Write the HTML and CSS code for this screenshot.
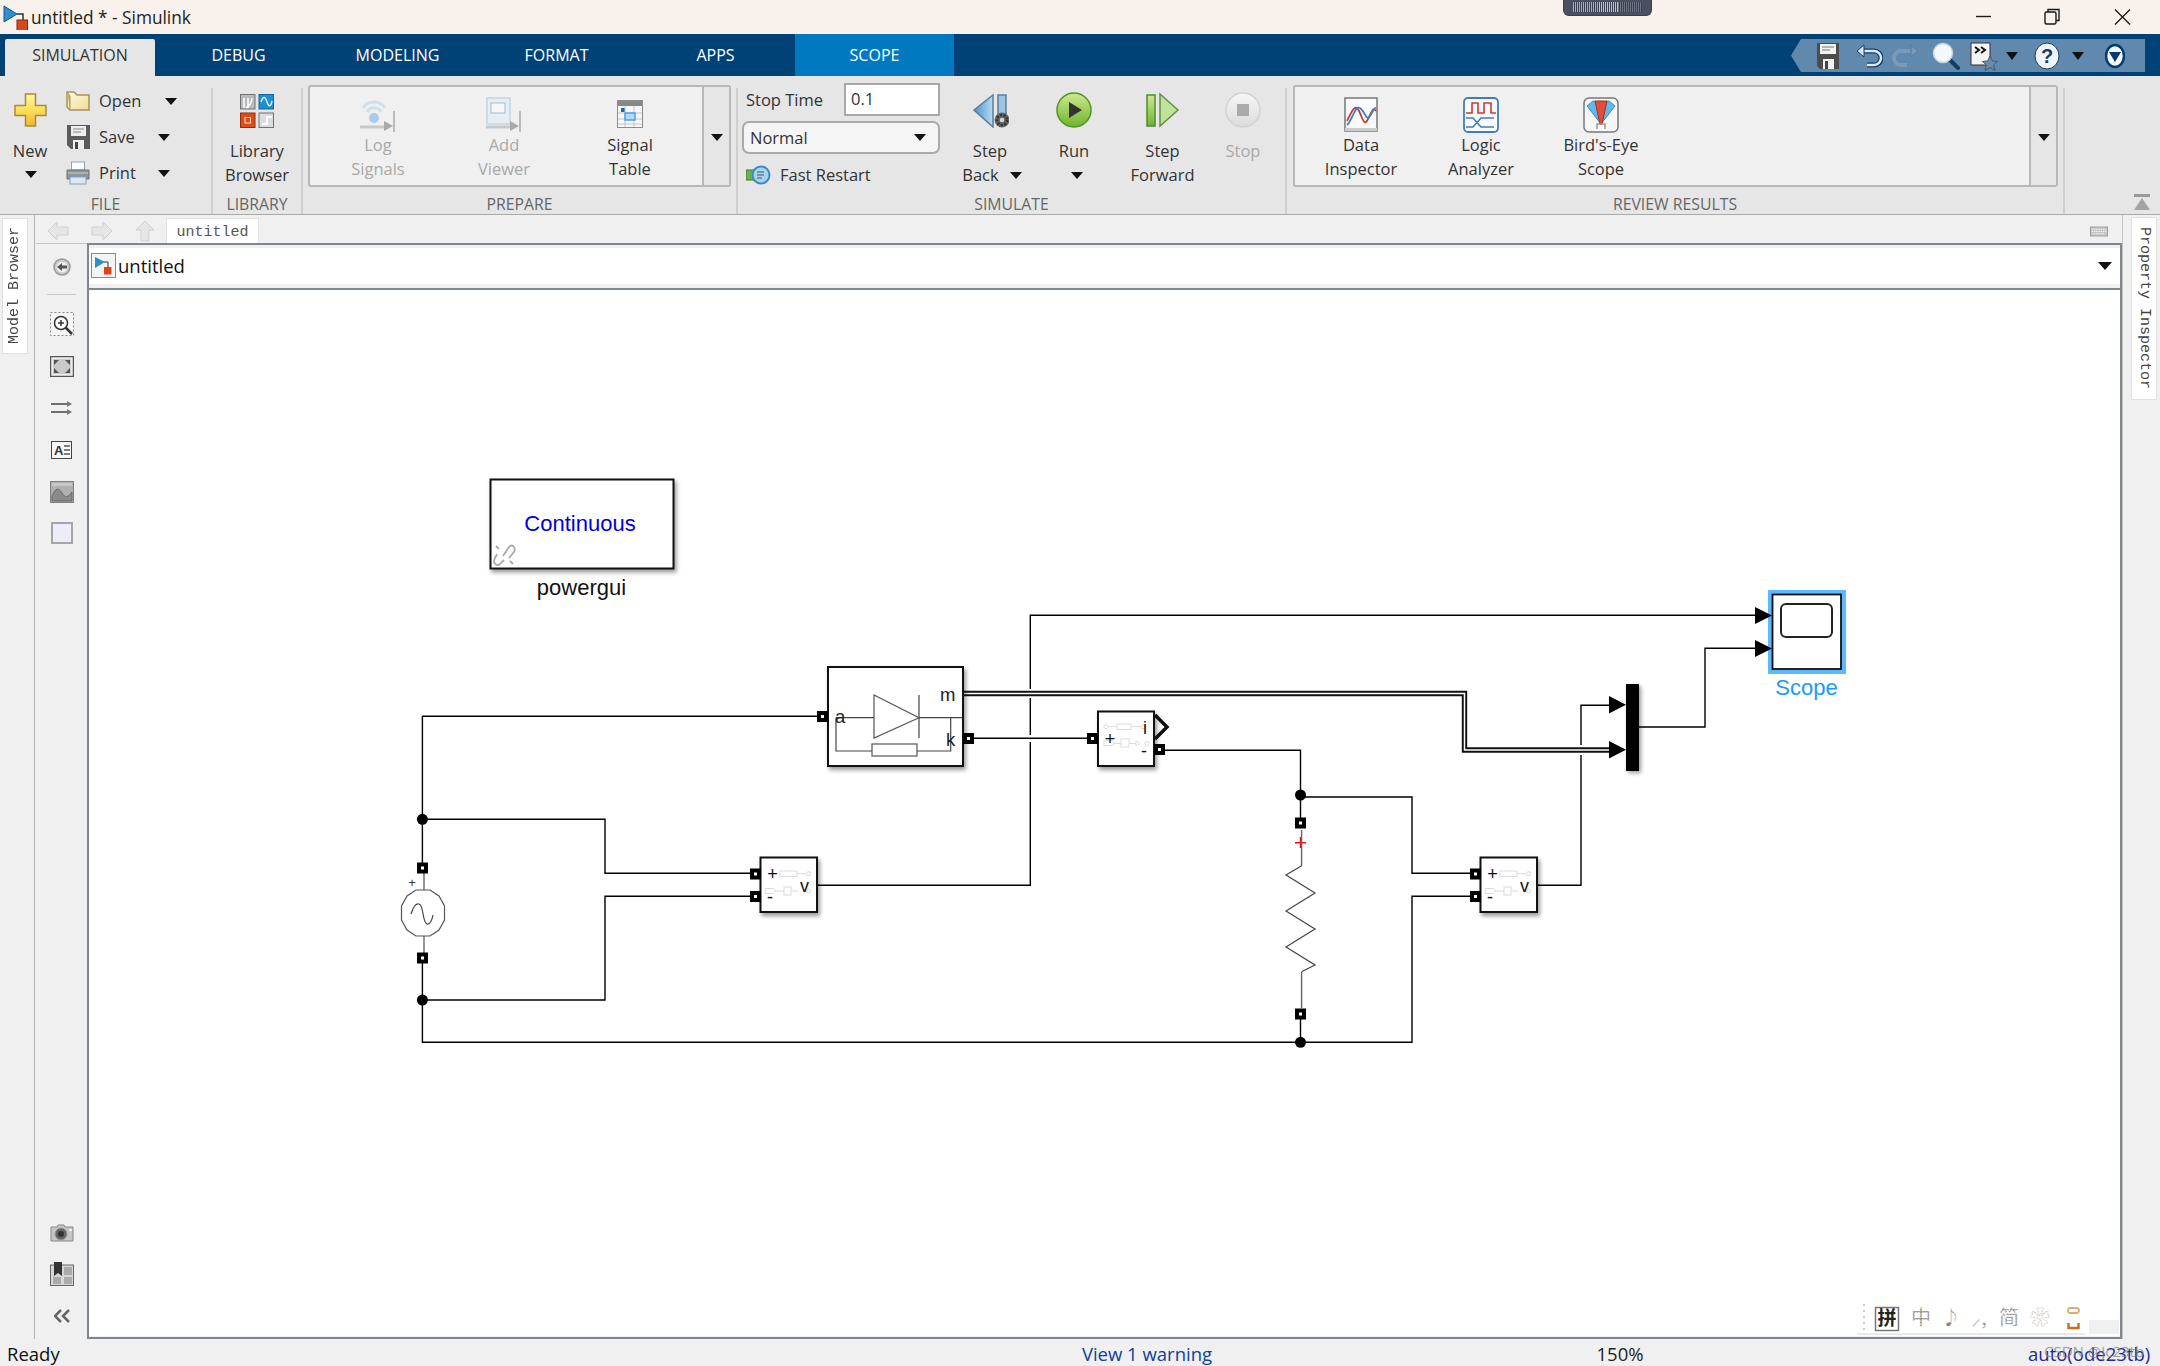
FILE: index.html
```html
<!DOCTYPE html>
<html lang="en">
<head>
<meta charset="utf-8">
<title>untitled * - Simulink</title>
<link rel="stylesheet" href="styles.css">
</head>
<body>
<svg class="defs" aria-hidden="true">
  <defs>
    <linearGradient id="gYellow" x1="0" y1="0" x2="0" y2="1"><stop offset="0" stop-color="#fff6a0"/><stop offset=".55" stop-color="#fbdc55"/><stop offset="1" stop-color="#f0b82c"/></linearGradient>
    <linearGradient id="gFolder" x1="0" y1="0" x2="1" y2="1"><stop offset="0" stop-color="#fffbe0"/><stop offset="1" stop-color="#f1dc95"/></linearGradient>
    <linearGradient id="gGreen" x1="0" y1="0" x2="0" y2="1"><stop offset="0" stop-color="#cfe88e"/><stop offset="1" stop-color="#6fb52e"/></linearGradient>
    <linearGradient id="gStop" x1="0" y1="0" x2="0" y2="1"><stop offset="0" stop-color="#f6f6f6"/><stop offset="1" stop-color="#dcdcdc"/></linearGradient>
    <linearGradient id="gBlue" x1="0" y1="0" x2="1" y2="0"><stop offset="0" stop-color="#4f93c9"/><stop offset="1" stop-color="#b9dbf3"/></linearGradient>
  </defs>
</svg>

<header class="titlebar">
  <svg class="logo" width="27" height="27" viewBox="0 0 27 27"><path d="M15 11h6v8" fill="none" stroke="#333" stroke-width="1.5"/><path d="M2 3l13 8-13 8z" fill="#2f8fc9" stroke="#17578a"/><rect x="15" y="17" width="10.500" height="10.500" fill="#d8481c" stroke="#7a2a10"/></svg>
  <span class="title-text">untitled * - Simulink</span>
  <div class="meter"><i class="led-on"></i><i class="led-mid"></i><i class="led-off"></i></div>
  <svg class="win-ctl" width="155" height="34" viewBox="0 0 155 34"><g fill="none" stroke="#1a1a1a" stroke-width="1.4"><path d="M0 16.500h15"/><rect x="69" y="12" width="11" height="12" rx="1.500"/><path d="M72 12v-2.500h11v11h-3"/><path d="M139 9.500l15 15M154 9.500l-15 15"/></g></svg>
</header>

<nav class="tabs">
  <div class="tab tab-active">SIMULATION</div>
  <div class="tab">DEBUG</div>
  <div class="tab">MODELING</div>
  <div class="tab">FORMAT</div>
  <div class="tab">APPS</div>
  <div class="tab tab-scope">SCOPE</div>
  <div class="quick">
    <svg width="26" height="28" viewBox="0 0 26 28"><path d="M2 1h22v26H5l-3-3z" fill="#4c4c4c"/><rect x="5" y="2" width="16" height="10" fill="#f2f2f2"/><path d="M7 5h12M7 8h8" stroke="#777"/><rect x="8" y="17" width="11" height="10" fill="#f2f2f2"/><rect x="10" y="19" width="3" height="8" fill="#444"/></svg>
    <svg width="28" height="26" viewBox="0 0 28 26"><path d="M9 8h10a6 6 0 0 1 0 14h-7" fill="none" stroke="#123d66" stroke-width="5"/><path d="M9 8h10a6 6 0 0 1 0 14h-7" fill="none" stroke="#d7e9f7" stroke-width="2.500"/><path d="M9 2v12l-7-6z" fill="#d7e9f7" stroke="#123d66"/></svg>
    <svg width="28" height="26" viewBox="0 0 28 26"><path d="M19 8H9a6 6 0 0 0 0 14h6" fill="none" stroke="#7a9ab8" stroke-width="4"/><path d="M19 2v12l7-6z" fill="#7a9ab8" stroke="#527aa0"/></svg>
    <svg width="28" height="28" viewBox="0 0 28 28"><path d="M17 17l9 9" stroke="#123d66" stroke-width="4" stroke-linecap="round"/><circle cx="11" cy="11" r="9.500" fill="#f4f8fb" stroke="#c7d6e2" stroke-width="1.500"/></svg>
    <svg width="28" height="30" viewBox="0 0 28 30"><path d="M1 2h19v22H1z" fill="#f4f4f4" stroke="#333"/><path d="M5 6l4 3-4 3M11 6l4 3-4 3" fill="none" stroke="#111" stroke-width="2"/><path d="M20 15l2.500 5 5 .5-4 3.500 1.500 5.500-5-3-5 3 1.500-5.500-4-3.500 5-.5z" fill="#6d8ba8" stroke="#3e5a75"/></svg>
    <svg class="tri" width="12" height="8" viewBox="0 0 12 8"><path d="M0 0h12L6 8z"/></svg>
    <svg width="26" height="28" viewBox="0 0 26 28"><ellipse cx="13" cy="14" rx="12" ry="13" fill="#f0f4f8" stroke="#123d66"/><text class="qmark" x="13" y="21" text-anchor="middle">?</text></svg>
    <svg class="tri" width="12" height="8" viewBox="0 0 12 8"><path d="M0 0h12L6 8z"/></svg>
    <svg width="20" height="26" viewBox="0 0 20 26"><ellipse cx="10" cy="13" rx="9" ry="11" fill="#f4f8fb" stroke="#003c6e" stroke-width="2.500"/><path d="M4 9h12l-6 10z" fill="#003c6e"/></svg>
  </div>
</nav>

<section class="ribbon">
  <div class="group group-file">
    <div class="group-body file-body">
      <div class="new-col">
        <svg width="33" height="34" viewBox="0 0 33 34"><path d="M11.500 1h10v11.500H32v10H21.500V33h-10V22.500H1v-10h10.500z" fill="url(#gYellow)" stroke="#a98a3c" stroke-width="1.500"/></svg>
        <span class="lbl new-lbl">New</span>
        <svg class="tri tri-row" width="12" height="7" viewBox="0 0 12 7"><path d="M0 0h12L6 7z"/></svg>
      </div>
      <div class="file-list">
        <div class="file-row"><svg width="24" height="20" viewBox="0 0 24 20"><path d="M1 1h7l3 3h12v15H4L1 16z" fill="url(#gFolder)" stroke="#a98f5c" stroke-width="1.500"/><path d="M1 1l3 4v14" fill="#cdb67c" stroke="#a98f5c"/></svg><span class="lbl file-name">Open</span><svg class="tri file-tri-open" width="12" height="7" viewBox="0 0 12 7"><path d="M0 0h12L6 7z"/></svg></div>
        <div class="file-row"><svg width="24" height="24" viewBox="0 0 24 24"><path d="M1 0h23v24H5l-4-4z" fill="#5c5c5c"/><rect x="5" y="1" width="15" height="10" fill="#eee"/><path d="M7 4h11M7 7h8" stroke="#888"/><rect x="7" y="15" width="11" height="9" fill="#eee"/><rect x="9" y="17" width="3" height="7" fill="#444"/></svg><span class="lbl file-name">Save</span><svg class="tri file-tri" width="12" height="7" viewBox="0 0 12 7"><path d="M0 0h12L6 7z"/></svg></div>
        <div class="file-row"><svg width="24" height="24" viewBox="0 0 24 24"><rect x="5.500" y="1" width="13" height="8" fill="#fdfdfd" stroke="#8aa2b8"/><path d="M1 9h22v9H1z" fill="#8f9599" stroke="#6d7478"/><rect x="4" y="16" width="16" height="7" fill="#dbe8f3" stroke="#7fa3c4"/><path d="M2 12h20" stroke="#c9cdd0"/></svg><span class="lbl file-name">Print</span><svg class="tri file-tri" width="12" height="7" viewBox="0 0 12 7"><path d="M0 0h12L6 7z"/></svg></div>
      </div>
    </div>
    <div class="group-label">FILE</div>
  </div>
  <div class="rsep"></div>

  <div class="group group-lib">
    <div class="group-body tool-row">
      <div class="tool tool-lib">
        <svg width="34" height="34" viewBox="0 0 34 34"><rect x=".5" y=".5" width="14.500" height="14.500" fill="#b9bcbf" stroke="#6f7275"/><path d="M4 14V4M8 14V4M12 4c0 5-3 8-6 10" stroke="#fff" stroke-width="1.500" fill="none"/><rect x="19" y=".5" width="14.500" height="14.500" fill="#1f8fd0" stroke="#14669a"/><path d="M21 8c2-6 4-6 6 0s4 4 5-1" fill="none" stroke="#cfeeff" stroke-width="1.500"/><rect x=".5" y="19" width="14.500" height="14.500" fill="#dd4d1a" stroke="#8e3010"/><rect x="5" y="23.500" width="5.500" height="5.500" fill="none" stroke="#ffd3bb"/><rect x="19" y="19" width="14.500" height="14.500" fill="#d9dde0" stroke="#6f7275"/><path d="M22 30h5v-7h5" fill="none" stroke="#fff" stroke-width="2"/></svg>
        <span class="lbl tool-first">Library</span>
        <span class="lbl">Browser</span>
      </div>
    </div>
    <div class="group-label">LIBRARY</div>
  </div>
  <div class="rsep"></div>

  <div class="group group-prep">
    <div class="group-body gallery-wrap">
      <div class="gallery gallery-prep">
        <div class="gal-items gal-items-prep">
          <div class="gal-item off">
            <svg width="36" height="36" viewBox="0 0 36 36"><g fill="none" stroke="#cfdfec" stroke-width="3"><path d="M3 11a13 13 0 0 1 22 0"/><path d="M7 15a8 8 0 0 1 14 0"/></g><circle cx="14" cy="21" r="5" fill="#a9cde6"/><path d="M0 30h24" stroke="#c8c8c8" stroke-width="3"/><path d="M24 24v10l9-5z" fill="#aaa"/><path d="M34 14v21" stroke="#aaa" stroke-width="1.500"/></svg>
            <span class="lbl">Log</span><span class="lbl">Signals</span>
          </div>
          <div class="gal-item off">
            <svg width="36" height="36" viewBox="0 0 36 36"><rect x="1" y="1" width="23" height="26" fill="#e6eef4" stroke="#c4d4e0" stroke-width="1.500"/><rect x="5" y="6" width="14" height="10" fill="#f4f8fb" stroke="#a9bccb"/><path d="M0 30h24" stroke="#c8c8c8" stroke-width="3"/><path d="M24 24v10l9-5z" fill="#aaa"/><path d="M34 14v21" stroke="#aaa" stroke-width="1.500"/></svg>
            <span class="lbl">Add</span><span class="lbl">Viewer</span>
          </div>
          <div class="gal-item">
            <svg class="sig-icon" width="26" height="28" viewBox="0 0 26 28"><rect x=".5" y=".5" width="25" height="27" fill="#f7f7f7" stroke="#8c8c8c"/><rect x="1" y="1" width="24" height="5" fill="#888"/><rect x="4" y="8" width="4" height="4" fill="#1f66b8"/><path d="M1 13h24M1 19h24M1 24h24M8 6v21M17 6v21" stroke="#c4c4c4"/><rect x="8" y="13" width="10" height="7" fill="#b5d8f4" stroke="#4da0e3" stroke-width="1.500"/></svg>
            <span class="lbl">Signal</span><span class="lbl">Table</span>
          </div>
        </div>
        <div class="gal-more"><svg class="tri" width="12" height="7" viewBox="0 0 12 7"><path d="M0 0h12L6 7z"/></svg></div>
      </div>
    </div>
    <div class="group-label">PREPARE</div>
  </div>
  <div class="rsep"></div>

  <div class="group group-sim">
    <div class="group-body sim-body">
      <div class="sim-controls">
        <div class="stop-row"><span class="lbl">Stop Time</span><div class="stop-input">0.1</div></div>
        <div class="mode-select"><span class="lbl">Normal</span><svg class="tri" width="12" height="7" viewBox="0 0 12 7"><path d="M0 0h12L6 7z"/></svg></div>
        <div class="fast-row"><svg width="25" height="22" viewBox="0 0 25 22"><rect x="0" y="6" width="9" height="10" fill="#6fb04a" stroke="#3a7d2b"/><circle cx="15" cy="11" r="8.500" fill="#a9d2ee" stroke="#3e8ac4" stroke-width="2"/><path d="M11 8h7M11 11h7M11 14h5" stroke="#3c5a72"/></svg><span class="lbl">Fast Restart</span></div>
      </div>
      <div class="sim-tools">
        <div class="tool">
          <svg width="38" height="36" viewBox="0 0 38 36"><path d="M3 18L22 3v32z" fill="url(#gBlue)" stroke="#5a7d99" stroke-width="1.500"/><rect x="27" y="3" width="8" height="27" fill="#9cc3e2" stroke="#5a7d99" stroke-width="1.500"/><circle cx="31" cy="28" r="7.500" fill="#666"/><circle cx="31" cy="28" r="5" fill="none" stroke="#333" stroke-width="2.500" stroke-dasharray="2 1.500"/><circle cx="31" cy="28" r="2.200" fill="#d9d9d9"/></svg>
          <span class="lbl tool-first">Step</span>
          <span class="lbl back-row">Back<svg class="tri" width="12" height="7" viewBox="0 0 12 7"><path d="M0 0h12L6 7z"/></svg></span>
        </div>
        <div class="tool">
          <svg width="36" height="36" viewBox="0 0 36 36"><circle cx="18" cy="18" r="17" fill="url(#gGreen)" stroke="#4f9628" stroke-width="1.500"/><path d="M13 10l13 8-13 8z" fill="#333"/></svg>
          <span class="lbl tool-first">Run</span>
          <span class="lbl tri-line"><svg class="tri" width="12" height="7" viewBox="0 0 12 7"><path d="M0 0h12L6 7z"/></svg></span>
        </div>
        <div class="tool">
          <svg width="34" height="36" viewBox="0 0 34 36"><rect x="1" y="3" width="8" height="31" fill="url(#gGreen)" stroke="#4f8c34" stroke-width="1.500"/><path d="M14 2l18 16-18 16z" fill="#bfe39a" stroke="#5d9440" stroke-width="1.500"/></svg>
          <span class="lbl tool-first">Step</span>
          <span class="lbl">Forward</span>
        </div>
        <div class="tool off">
          <svg width="36" height="36" viewBox="0 0 36 36"><circle cx="18" cy="18" r="17" fill="url(#gStop)" stroke="#d2d2d2" stroke-width="1.500"/><rect x="12" y="12" width="12" height="12" fill="#aaa"/></svg>
          <span class="lbl tool-first">Stop</span>
        </div>
      </div>
    </div>
    <div class="group-label">SIMULATE</div>
  </div>
  <div class="rsep"></div>

  <div class="group group-rev">
    <div class="group-body gallery-wrap">
      <div class="gallery gallery-rev">
        <div class="gal-items gal-items-rev">
          <div class="gal-item">
            <svg width="34" height="36" viewBox="0 0 34 36"><rect x="1" y="1" width="32" height="33" fill="#fafafa" stroke="#777" stroke-width="1.500"/><path d="M3 24c5-10 8-18 12-10s5 16 9 8 5-12 8-8" fill="none" stroke="#c93a3a" stroke-width="1.800"/><path d="M3 28c5-4 8-20 13-17s6 14 10 8 4-9 6-8" fill="none" stroke="#3d80c4" stroke-width="1.800"/><rect x="1" y="31" width="32" height="3" fill="#ccc"/></svg>
            <span class="lbl">Data</span><span class="lbl">Inspector</span>
          </div>
          <div class="gal-item">
            <svg width="36" height="36" viewBox="0 0 36 36"><rect x="1" y="1" width="34" height="34" rx="4" fill="#fafafa" stroke="#3f7fb9" stroke-width="1.800"/><path d="M3 16h6V6h6v10h6V6h7v10h5" fill="none" stroke="#cc3a3a" stroke-width="1.600"/><path d="M3 21h7l8 9h13M3 30h7l8-9h13" fill="none" stroke="#3f7fb9" stroke-width="1.600"/></svg>
            <span class="lbl">Logic</span><span class="lbl">Analyzer</span>
          </div>
          <div class="gal-item">
            <svg width="36" height="36" viewBox="0 0 36 36"><rect x="1" y="1" width="34" height="34" rx="5" fill="#f7f7f7" stroke="#777" stroke-width="1.500"/><path d="M4 9l6-5 6 1 2 22z" fill="#63b8ea" stroke="#2f8ec9"/><path d="M32 9l-6-5-6 1-2 22z" fill="#63b8ea" stroke="#2f8ec9"/><path d="M12 4h12l-5 23h-2z" fill="#e24c3b" stroke="#a22f24"/><path d="M14 32v-5h8v5" fill="none" stroke="#999" stroke-width="1.500"/></svg>
            <span class="lbl">Bird's-Eye</span><span class="lbl">Scope</span>
          </div>
        </div>
        <div class="gal-more"><svg class="tri" width="12" height="7" viewBox="0 0 12 7"><path d="M0 0h12L6 7z"/></svg></div>
      </div>
    </div>
    <div class="group-label">REVIEW RESULTS</div>
  </div>
  <div class="rsep"></div>
  <div class="ribbon-tail">
    <svg width="16" height="16" viewBox="0 0 16 16"><rect x="0" y="0" width="16" height="3" fill="#9a9a9a"/><path d="M8 4l8 12H0z" fill="#a3a3a3"/></svg>
  </div>
</section>

<main class="workspace">
  <aside class="side-left"><div class="side-tab"><span class="vtext vtext-up">Model Browser</span></div></aside>
  <div class="center">
    <div class="crumb-row">
      <div class="crumb-nav">
        <svg width="22" height="20" viewBox="0 0 22 20"><path d="M10 1L1 10l9 9v-5h11V6H10z" fill="#e6e6e6" stroke="#cfcfcf"/></svg>
        <svg width="22" height="20" viewBox="0 0 22 20"><path d="M12 1l9 9-9 9v-5H1V6h11z" fill="#e6e6e6" stroke="#cfcfcf"/></svg>
        <svg width="20" height="22" viewBox="0 0 20 22"><path d="M10 1l9 9h-5v11H6V10H1z" fill="#e6e6e6" stroke="#cfcfcf"/></svg>
      </div>
      <div class="crumb-tab">untitled</div>
      <svg class="kbd" width="20" height="11" viewBox="0 0 20 11"><rect x=".5" y=".5" width="19" height="10" fill="#c6c6c6" stroke="#999"/><path d="M2 3h16M2 5.500h16M4 8h12" stroke="#fff" stroke-dasharray="1.500 1"/></svg>
    </div>
    <div class="editor">
      <div class="toolstrip">
        <div class="strip-top">
          <svg width="18" height="18" viewBox="0 0 18 18"><circle cx="9" cy="9" r="8" fill="#c8c8c8" stroke="#999" stroke-width="1.500"/><circle cx="9" cy="9" r="5.500" fill="#efefef"/><path d="M4 9l5-4v2.500h5v3H9V13z" fill="#555"/></svg>
          <div class="strip-sep"></div>
          <svg width="24" height="24" viewBox="0 0 24 24"><rect x=".5" y=".5" width="23" height="23" fill="#f6f6f6" stroke="#888" stroke-dasharray="2 2"/><path d="M15 15l7 7" stroke="#333" stroke-width="2.500"/><circle cx="11" cy="11" r="6.500" fill="#fff" stroke="#333" stroke-width="1.500"/><path d="M8 11h6M11 8v6" stroke="#333" stroke-width="1.500"/></svg>
          <svg width="24" height="21" viewBox="0 0 24 21"><rect x=".5" y=".5" width="23" height="20" fill="#eee" stroke="#555" stroke-width="1.500"/><rect x="3" y="3" width="18" height="15" fill="#c9c9c9"/><path d="M4 4h5L4 9zM20 4h-5l5 5zM4 17h5l-5-5zM20 17h-5l5-5z" fill="#555"/></svg>
          <svg width="22" height="14" viewBox="0 0 22 14"><path d="M0 3h17M0 11h17" stroke="#444" stroke-width="1.500"/><path d="M16 0l5 3-5 3zM16 8l5 3-5 3z" fill="#777"/></svg>
          <svg width="21" height="18" viewBox="0 0 21 18"><rect x=".5" y=".5" width="20" height="17" fill="#f8f8f8" stroke="#444"/><text class="st-a" x="3" y="14">A</text><path d="M13 5h6M13 9h6M13 13h6" stroke="#555" stroke-width="1.500"/></svg>
          <svg width="24" height="22" viewBox="0 0 24 22"><rect x=".5" y=".5" width="23" height="21" fill="#b0b0b0" stroke="#808080"/><path d="M2 15c4-9 7-8 10-3s6 5 10-1v9H2z" fill="#8a8a8a" stroke="#666"/><rect x="2" y="2" width="20" height="3" fill="#c8c8c8"/></svg>
          <div class="st-rect"></div>
        </div>
        <div class="strip-bottom">
          <svg width="24" height="18" viewBox="0 0 24 18"><path d="M1 3h6l1-2h6l1 2h8v14H1z" fill="#c6c6c6" stroke="#888"/><circle cx="11" cy="10" r="6" fill="#666" stroke="#999"/><circle cx="11" cy="10" r="3" fill="#333"/><rect x="19" y="5" width="3" height="2" fill="#eee"/></svg>
          <svg width="24" height="24" viewBox="0 0 24 24"><rect x=".5" y="3" width="23" height="20.500" fill="#d6d6d6" stroke="#666"/><rect x="14" y="5" width="8" height="8" fill="#aaa"/><rect x="14" y="15" width="8" height="7" fill="#aaa"/><rect x="3" y="15" width="8" height="7" fill="#aaa"/><path d="M4 0h8v14l-4-3-4 3z" fill="#333"/></svg>
          <svg width="16" height="14" viewBox="0 0 16 14"><path d="M7 1L1 7l6 6M15 1L9 7l6 6" fill="none" stroke="#666" stroke-width="2.500"/></svg>
        </div>
      </div>
      <div class="canvas-col">
        <div class="address">
          <svg width="25" height="25" viewBox="0 0 25 25"><rect x=".5" y=".5" width="24" height="24" fill="#f4f4f4" stroke="#8a8a8a"/><path d="M13 9h4v6" fill="none" stroke="#333"/><path d="M4 4l10 5-10 6z" fill="#2f8fc9"/><rect x="13" y="14" width="7.500" height="7.500" fill="#d8481c"/></svg>
          <span class="addr-text">untitled</span>
          <svg class="addr-arrow" width="14" height="8" viewBox="0 0 14 8"><path d="M0 0h14L7 8z"/></svg>
        </div>
        <svg class="diagram" width="2031" height="1046" viewBox="89 290 2031 1046">
          <defs>
            <g id="port"><rect x="0" y="0" width="11" height="11" fill="#000"/><rect x="4" y="4" width="3" height="3" fill="#fff"/></g>
          </defs>

          <!-- signal and electrical wires -->
          <path class="wire" d="M817 716.300H422.400V863M422.400 819.300H605V873.300H750M750 896.300H605V1000H422.400M422.400 963V1042.300H1412V896.300H1470M1300.500 1019V1042.300"/>
          <path class="wire" d="M817 885.300H1030.300V615.300H1756"/>
          <rect class="halo" x="1027" y="689" width="7" height="9"/>
          <rect class="halo" x="1027" y="735" width="7" height="7"/>
          <path class="wire" d="M974 738.300H1087M1165 750.300H1300.500V818M1300.500 797H1412V873.300H1470"/>
          <path class="wire" d="M1537 885.300H1581V705.300H1610"/>
          <rect class="halo" x="1578" y="745" width="6" height="10"/>
          <path class="wire" d="M1639 727H1705V648.300H1756"/>
          <path class="phys-out" d="M963 693.500H1464.500V750H1610"/>
          <path class="phys-in" d="M963 693.500H1464.500V750H1610"/>

          <circle cx="422.400" cy="819.300" r="5.500"/>
          <circle cx="422.400" cy="1000" r="5.500"/>
          <circle cx="1300.500" cy="795" r="5.500"/>
          <circle cx="1300.500" cy="1042.300" r="5.500"/>

          <!-- powergui -->
          <rect class="block" x="490.500" y="479.500" width="183" height="89"/>
          <text class="dia-text blue" x="580" y="531" text-anchor="middle">Continuous</text>
          <text class="dia-text" x="581.500" y="595" text-anchor="middle">powergui</text>
          <g class="link-ico"><path d="M503 556l6-9q3-3 5 0t-1 6l-4 5M497 554l-2.500 5q-1.500 4 1.500 5.500t5-1.500l3-3"/><path d="M496 546l3 3M510 561l3 3"/></g>

          <!-- diode -->
          <rect class="block" x="828" y="667" width="135" height="99"/>
          <path class="thin" d="M836 717.700H874M919 717.700H962M950.700 717.700V751H836V717.700"/>
          <path class="thin-fill" d="M874 695L919 717.700 874 738z"/>
          <path class="thin" d="M919 695V738"/>
          <rect class="thin-fill" x="872" y="744" width="45" height="12"/>
          <text class="dia-small" x="940" y="701">m</text>
          <text class="dia-small" x="835" y="723">a</text>
          <text class="dia-small" x="946" y="746">k</text>
          <use href="#port" x="817" y="711"/>
          <use href="#port" x="963" y="733"/>

          <!-- current measurement -->
          <rect class="block" x="1098" y="711.500" width="56" height="54.500"/>
          <g class="ghost"><circle cx="1106" cy="726.700" r="2"/><path d="M1108 726.700h9M1131 726.700h10"/><rect x="1117" y="724" width="14" height="5.500"/><circle cx="1143" cy="726.700" r="2"/><path d="M1104 740.500h8l3 2.500-3 2.500h-8zM1115 743.500h6M1129 743.500h7"/><rect x="1121" y="739" width="8" height="8"/><path d="M1136 741l4 2.500-4 2.500z"/><circle cx="1147" cy="743.500" r="2"/></g>
          <text class="dia-mid" x="1110" y="745" text-anchor="middle">+</text>
          <text class="dia-mid" x="1144" y="757" text-anchor="middle">-</text>
          <text class="dia-mid" x="1145" y="734" text-anchor="middle">i</text>
          <path class="chev" d="M1155 715L1167 727 1155 739"/>
          <use href="#port" x="1087" y="733"/>
          <use href="#port" x="1154" y="744"/>

          <!-- voltage measurement, left -->
          <g id="vm">
            <rect class="block" x="760.500" y="857.500" width="56.500" height="54.500"/>
            <g class="ghost"><rect x="780" y="871" width="17" height="5.500"/><path d="M797 873.700h9"/><circle cx="808.500" cy="873.700" r="2"/><path d="M765 888.500h8l3 2.500-3 2.500h-8zM776 891h8M791 891h8"/><rect x="784" y="887" width="7" height="8"/><circle cx="808.500" cy="891" r="2"/></g>
            <text class="dia-mid" x="772.500" y="880" text-anchor="middle">+</text>
            <text class="dia-mid" x="770" y="903" text-anchor="middle">-</text>
            <text class="dia-mid" x="804.500" y="892" text-anchor="middle">v</text>
            <use href="#port" x="750" y="868.500"/>
            <use href="#port" x="750" y="891"/>
          </g>
          <use href="#vm" x="720"/>

          <!-- AC source -->
          <path class="gray-wire" d="M424 873V890M424 936V953"/>
          <path class="thin-fill" d="M416 890h14l9 6 5.500 10v14l-5.500 10-9 6h-14l-9-6-5.500-10v-14l5.500-10z"/>
          <path class="wave" d="M411 914c2-7 5-11 8-10 5 1 3 18 8 20 3 1 5-4 6-9"/>
          <text class="dia-tiny" x="412" y="887" text-anchor="middle">+</text>
          <use href="#port" x="417" y="862.500"/>
          <use href="#port" x="417" y="952.500"/>

          <!-- series RLC -->
          <use href="#port" x="1295" y="817.500"/>
          <use href="#port" x="1295" y="1008.500"/>
          <path class="plus-red" d="M1295 842.700h11M1300.500 837v11"/>
          <path class="gray-wire" d="M1301.600 830V866M1301.600 972V1008"/>
          <path class="thin" d="M1301.600 865.700L1286 875 1315 893 1286 911 1315 929 1286 947 1315 965 1301.600 971.700"/>

          <!-- mux -->
          <rect class="mux" x="1626" y="684" width="13" height="87"/>
          <path d="M1609 696l17 8.800-17 8.700zM1609 741l17 8.800-17 8.700z"/>

          <!-- scope -->
          <rect class="scope-sel" x="1768" y="590" width="78" height="84"/>
          <rect class="scope-body" x="1772.500" y="594.500" width="68.500" height="74.500"/>
          <rect class="scope-screen" x="1781" y="604" width="51" height="33" rx="5"/>
          <path d="M1755 607l17 8.500-17 8.500zM1755 640l17 8.500-17 8.500z"/>
          <text class="dia-text scope-name" x="1806.500" y="695" text-anchor="middle">Scope</text>

          <!-- input method bar -->
          <g class="ime">
            <path class="ime-dots" d="M1864 1304v28"/>
            <rect class="ime-box" x="1875.500" y="1307.500" width="23" height="23"/>
            <text class="ime-on" x="1887" y="1325" text-anchor="middle">拼</text>
            <text class="ime-off" x="1921" y="1325" text-anchor="middle">中</text>
            <text class="ime-off" x="1951" y="1325" text-anchor="middle">♪</text>
            <text class="ime-off" x="1979" y="1325" text-anchor="middle">⸝,</text>
            <text class="ime-off" x="2009" y="1325" text-anchor="middle">简</text>
            <text class="ime-off" x="2040" y="1325" text-anchor="middle">❀</text>
            <rect class="ime-cap-top" x="2068" y="1308" width="11" height="5" rx="2.500"/>
            <path class="ime-cap" d="M2068.500 1323v5h10v-5"/>
            <path class="ime-line" d="M1857 1334H2085"/>
            <rect class="ime-ghost" x="2089" y="1320" width="30" height="14"/>
          </g>
        </svg>
      </div>
    </div>
  </div>
  <aside class="side-right"><div class="side-tab side-tab-r"><span class="vtext vtext-down">Property Inspector</span></div></aside>
</main>

<footer class="statusbar">
  <span class="st-ready">Ready</span>
  <span class="st-warn">View 1 warning</span>
  <span class="st-zoom">150%</span>
  <span class="st-solver">auto(ode23tb)<span class="mark">CSDN @Jc23tb</span></span>
</footer>
</body>
</html>
```

FILE: styles.css
```css
* { box-sizing: border-box; }
html, body { margin: 0; padding: 0; }
body {
  width: 2160px;
  height: 1366px;
  overflow: hidden;
  display: flex;
  flex-direction: column;
  background: #f0f0f0;
  font-family: "Open Sans", "Noto Sans", "Liberation Sans", sans-serif;
  color: #333;
}
svg { display: block; flex: none; }
.defs { position: absolute; width: 0; height: 0; }
.tri path { fill: #111; }

/* title bar */
.titlebar { height: 34px; flex: none; display: flex; background: #f8f1ec; padding-left: 2px; }
.logo { margin-top: 3px; }
.title-text { width: 1532px; margin-left: 2px; font-size: 17.300px; line-height: 36px; color: #222; }
.meter { width: 89px; height: 16px; background: #4a5060; border-radius: 0 0 6px 6px; border: 1px solid #3a3f4d; border-top: 0; padding: 2px 9px 3px; display: flex; }
.meter i { display: block; height: 100%; }
.led-on { width: 26px; background: repeating-linear-gradient(90deg, #5fd0b0 0 1px, #3a4050 1px 2px); }
.led-mid { width: 19px; background: repeating-linear-gradient(90deg, #d7cf55 0 1px, #3a4050 1px 2px); }
.led-off { width: 24px; background: repeating-linear-gradient(90deg, #6e7482 0 1px, #3a4050 1px 2px); }
.win-ctl { margin-left: 324px; }

/* tab strip */
.tabs { height: 42px; flex: none; display: flex; background: #004275; }
.tab { width: 159px; text-align: center; color: #fff; font-size: 16px; line-height: 42px; }
.tab-active { width: 150px; margin: 5px 4px 0 5px; background: #e6e6e6; color: #333; line-height: 32px; border-radius: 2px 2px 0 0; }
.tab-scope { background: #0079c1; }
.quick {
  margin: 5px 15px 4px auto;
  width: 354px;
  height: 33px;
  padding-left: 19px;
  background: #6089ad;
  clip-path: polygon(0 50%, 10px 0, 100% 0, 100% 100%, 10px 100%);
  display: grid;
  grid-template-columns: 36px 46px 28px 52px 24px 32px 38px 24px 50px;
  justify-items: center;
  align-items: center;
}
.qmark { font: 700 20px "Liberation Sans", sans-serif; fill: #123d66; }

/* ribbon */
.ribbon { height: 139px; flex: none; display: flex; background: #e6e6e6; border-bottom: 1px solid #aaa; }
.rsep { width: 2px; margin-top: 12px; background: #cfcfcf; flex: none; }
.group { display: flex; flex-direction: column; flex: none; }
.group-body { height: 117px; flex: none; }
.group-label { height: 21px; text-align: center; font-size: 15.800px; line-height: 23px; color: #666; }
.group-file { width: 211px; }
.group-lib { width: 88px; }
.group-prep { width: 433px; }
.group-sim { width: 547px; }
.group-rev { width: 776px; }
.lbl { display: block; font-size: 16.500px; line-height: 24px; color: #333; white-space: nowrap; }
.off .lbl { color: #a9a9a9; }

.file-body { display: flex; }
.new-col { width: 60px; padding-top: 17px; padding-left: 14px; display: flex; flex-direction: column; }
.new-lbl { margin-top: 12px; margin-left: -14px; width: 60px; text-align: center; }
.tri-row { margin: 8px 0 0 11px; }
.file-list { margin-left: 6px; padding-top: 13px; display: flex; flex-direction: column; gap: 12px; }
.file-row { height: 24px; display: flex; align-items: center; }
.file-name { width: 60px; margin-left: 9px; }
.file-tri-open { margin-left: 6px; }
.file-tri { margin-left: -1px; }

.tool-row { display: flex; justify-content: center; }
.tool { display: flex; flex-direction: column; align-items: center; }
.tool-lib { padding-top: 18px; }
.tool-first { margin-top: 11px; }

.gallery-wrap { padding: 9px 5px 0; }
.gallery { height: 102px; display: flex; background: #f0f0f0; border: 2px solid #b8b8b8; border-radius: 3px; }
.gallery-prep { width: 423px; }
.gallery-rev { width: 765px; margin-left: 1px; }
.gal-items { display: flex; padding-top: 10px; border-right: 2px solid #b8b8b8; }
.gal-items-prep { width: 394px; padding-left: 5px; }
.gal-items-rev { width: 736px; padding-left: 6px; }
.gal-item { display: flex; flex-direction: column; align-items: center; width: 126px; }
.gal-items-rev .gal-item { width: 120px; }
.gal-item svg { height: 36px; margin-bottom: 0; }
.gal-item .sig-icon { height: 28px; margin: 3px 0 5px; }
.gal-more { flex: 1; background: #e6e6e6; display: flex; justify-content: center; padding-top: 47px; }

.sim-body { display: flex; }
.sim-controls { width: 211px; padding: 7px 0 0 4px; display: flex; flex-direction: column; }
.stop-row { height: 33px; display: flex; align-items: center; justify-content: space-between; padding-left: 4px; width: 198px; }
.stop-input { width: 96px; height: 33px; border: 2px solid #a8a8a8; background: #fff; font-size: 16.500px; line-height: 27px; padding-left: 5px; }
.mode-select { width: 198px; height: 33px; margin-top: 5px; border: 2px solid #aaa; border-radius: 7px; background: #f5f5f5; display: flex; align-items: center; justify-content: space-between; padding: 0 12px 0 6px; }
.fast-row { display: flex; align-items: center; gap: 9px; margin-top: 9px; padding-left: 4px; }
.sim-tools { display: grid; grid-template-columns: 82px 86px 91px 70px; padding-top: 16px; }
.back-row { display: flex; align-items: center; gap: 11px; padding-left: 4px; }
.tri-line { height: 24px; display: flex; align-items: center; padding-left: 5px; }

.ribbon-tail { flex: 1; display: flex; align-items: flex-end; justify-content: flex-end; padding: 0 10px 4px 0; }

/* workspace */
.workspace { flex: 1; min-height: 0; display: flex; }
.side-left { width: 35px; flex: none; border-right: 1px solid #b4b4b4; padding: 3px 0 0 2px; }
.side-tab { width: 26px; height: 136px; background: #fff; border: 1px solid #e0e0e0; display: flex; justify-content: center; align-items: center; }
.vtext { font-family: "Liberation Mono", "DejaVu Sans Mono", monospace; font-size: 15px; line-height: 24px; color: #444; white-space: nowrap; writing-mode: vertical-rl; }
.vtext-up { transform: rotate(180deg); }
.side-tab-r { height: 183px; }
.center { width: 2087px; flex: none; display: flex; flex-direction: column; }
.side-right { width: 38px; flex: none; border-left: 1px solid #c4c4c4; padding: 2px 0 0 8px; }

.crumb-row { height: 28px; flex: none; display: flex; align-items: flex-end; }
.crumb-nav { width: 131px; height: 28px; display: grid; grid-template-columns: 46px 42px 44px; justify-items: center; align-items: center; padding-top: 3px; }
.crumb-tab { width: 93px; height: 25px; background: #fff; border: 1px solid #e2e2e2; border-bottom: 0; font-family: "Liberation Mono", monospace; font-size: 15px; line-height: 27px; text-align: center; color: #555; }
.kbd { width: 18px; margin: 0 14px 6px auto; }

.editor { flex: 1; min-height: 0; display: flex; }
.toolstrip { width: 51px; flex: none; border-top: 1px solid #c4c4c4; margin-left: 1px; display: flex; flex-direction: column; justify-content: space-between; align-items: center; padding: 3px 0 2px; }
.strip-top, .strip-bottom { display: grid; justify-items: center; align-items: center; }
.strip-top { grid-template-rows: 39px 17px 42px 42px 42px 42px 42px 40px; }
.strip-bottom { grid-template-rows: 41px 41px 43px; }
.strip-sep { width: 29px; height: 1px; background: #c8c8c8; }
.st-a { font: 700 13px "Liberation Sans", sans-serif; fill: #333; }
.st-rect { width: 22px; height: 22px; background: #ededfa; border: 2px solid #a5a5a5; }
.canvas-col { flex: 1; min-width: 0; display: flex; flex-direction: column; border-left: 2px solid #80868f; border-right: 2px solid #80868f; border-bottom: 2px solid #80868f; }
.address { height: 47px; flex: none; border-top: 2px solid #80868f; border-bottom: 2px solid #80868f; background: #fff; box-shadow: inset 0 3px 0 #f0f0f0, inset 0 -4px 0 #f0f0f0; display: flex; align-items: center; padding: 0 0 2px 2px; }
.addr-text { font-size: 18.500px; color: #111; margin-left: 2px; }
.addr-arrow { margin-left: auto; margin-right: 8px; }
.addr-arrow path { fill: #111; }
.diagram { background: #fff; }

/* diagram */
.wire { fill: none; stroke: #000; stroke-width: 1.400; }
.halo { fill: #fff; }
.phys-out { fill: none; stroke: #111; stroke-width: 5.400; }
.phys-in { fill: none; stroke: #fff; stroke-width: 1.500; }
.block { fill: #fff; stroke: #111; stroke-width: 2; filter: drop-shadow(2px 3px 2px rgba(0,0,0,.4)); }
.dia-text { font: 22px "Liberation Sans", sans-serif; fill: #111; }
.blue { fill: #0000d8; }
.scope-name { fill: #1a9cff; }
.dia-small { font: 18.500px "Liberation Sans", sans-serif; fill: #222; }
.dia-mid { font: 18px "Liberation Sans", sans-serif; fill: #111; }
.dia-tiny { font: 13px "Liberation Sans", sans-serif; fill: #333; }
.thin { fill: none; stroke: #444; stroke-width: 1.200; }
.thin-fill { fill: #fff; stroke: #555; stroke-width: 1.200; }
.ghost { fill: #fff; stroke: #dcdcdc; stroke-width: 1; }
.chev { fill: none; stroke: #111; stroke-width: 3.500; }
.link-ico { fill: none; stroke: #aaa; stroke-width: 1.800; }
.gray-wire { fill: none; stroke: #666; stroke-width: 1.400; }
.wave { fill: none; stroke: #444; stroke-width: 1.200; }
.plus-red { fill: none; stroke: #e8101c; stroke-width: 1.500; }
.mux { fill: #000; filter: drop-shadow(2px 2px 2px rgba(0,0,0,.4)); }
.scope-sel { fill: #5db9ff; }
.scope-body { fill: #fff; stroke: #111; stroke-width: 1.800; }
.scope-screen { fill: #fff; stroke: #222; stroke-width: 2; }
.ime-box { fill: #fff; stroke: #777; stroke-width: 1.500; }
.ime-on { font: 700 19px "Noto Sans CJK SC", sans-serif; fill: #222; }
.ime-off { font: 20px "Noto Sans CJK SC", "DejaVu Sans", sans-serif; fill: #888; stroke: #fff; stroke-width: .5; stroke-dasharray: 2 1; }
.ime-dots { stroke: #ccc; stroke-width: 2; stroke-dasharray: 2 4; }
.ime-cap-top { fill: #fff; stroke: #d9b070; stroke-width: 1.800; }
.ime-cap { fill: none; stroke: #c07420; stroke-width: 2.400; }
.ime-line { stroke: #e2e2e2; stroke-width: 1.500; }
.ime-ghost { fill: #f0f0f0; }

/* status bar */
.statusbar { height: 27px; flex: none; display: grid; grid-template-columns: 1040px 214px 732px 1fr; align-items: center; background: #f0f0f0; font-size: 18.500px; line-height: 27px; color: #222; padding-top: 1px; }
.st-ready { padding-left: 7px; color: #111; }
.st-warn { text-align: center; color: #0c3f9c; }
.st-zoom { text-align: center; }
.st-solver { position: relative; padding-left: 42px; color: #1b2a96; white-space: nowrap; }
.mark { position: absolute; left: 58px; top: -2px; font-size: 15px; color: rgba(130,130,130,.75); }
```
